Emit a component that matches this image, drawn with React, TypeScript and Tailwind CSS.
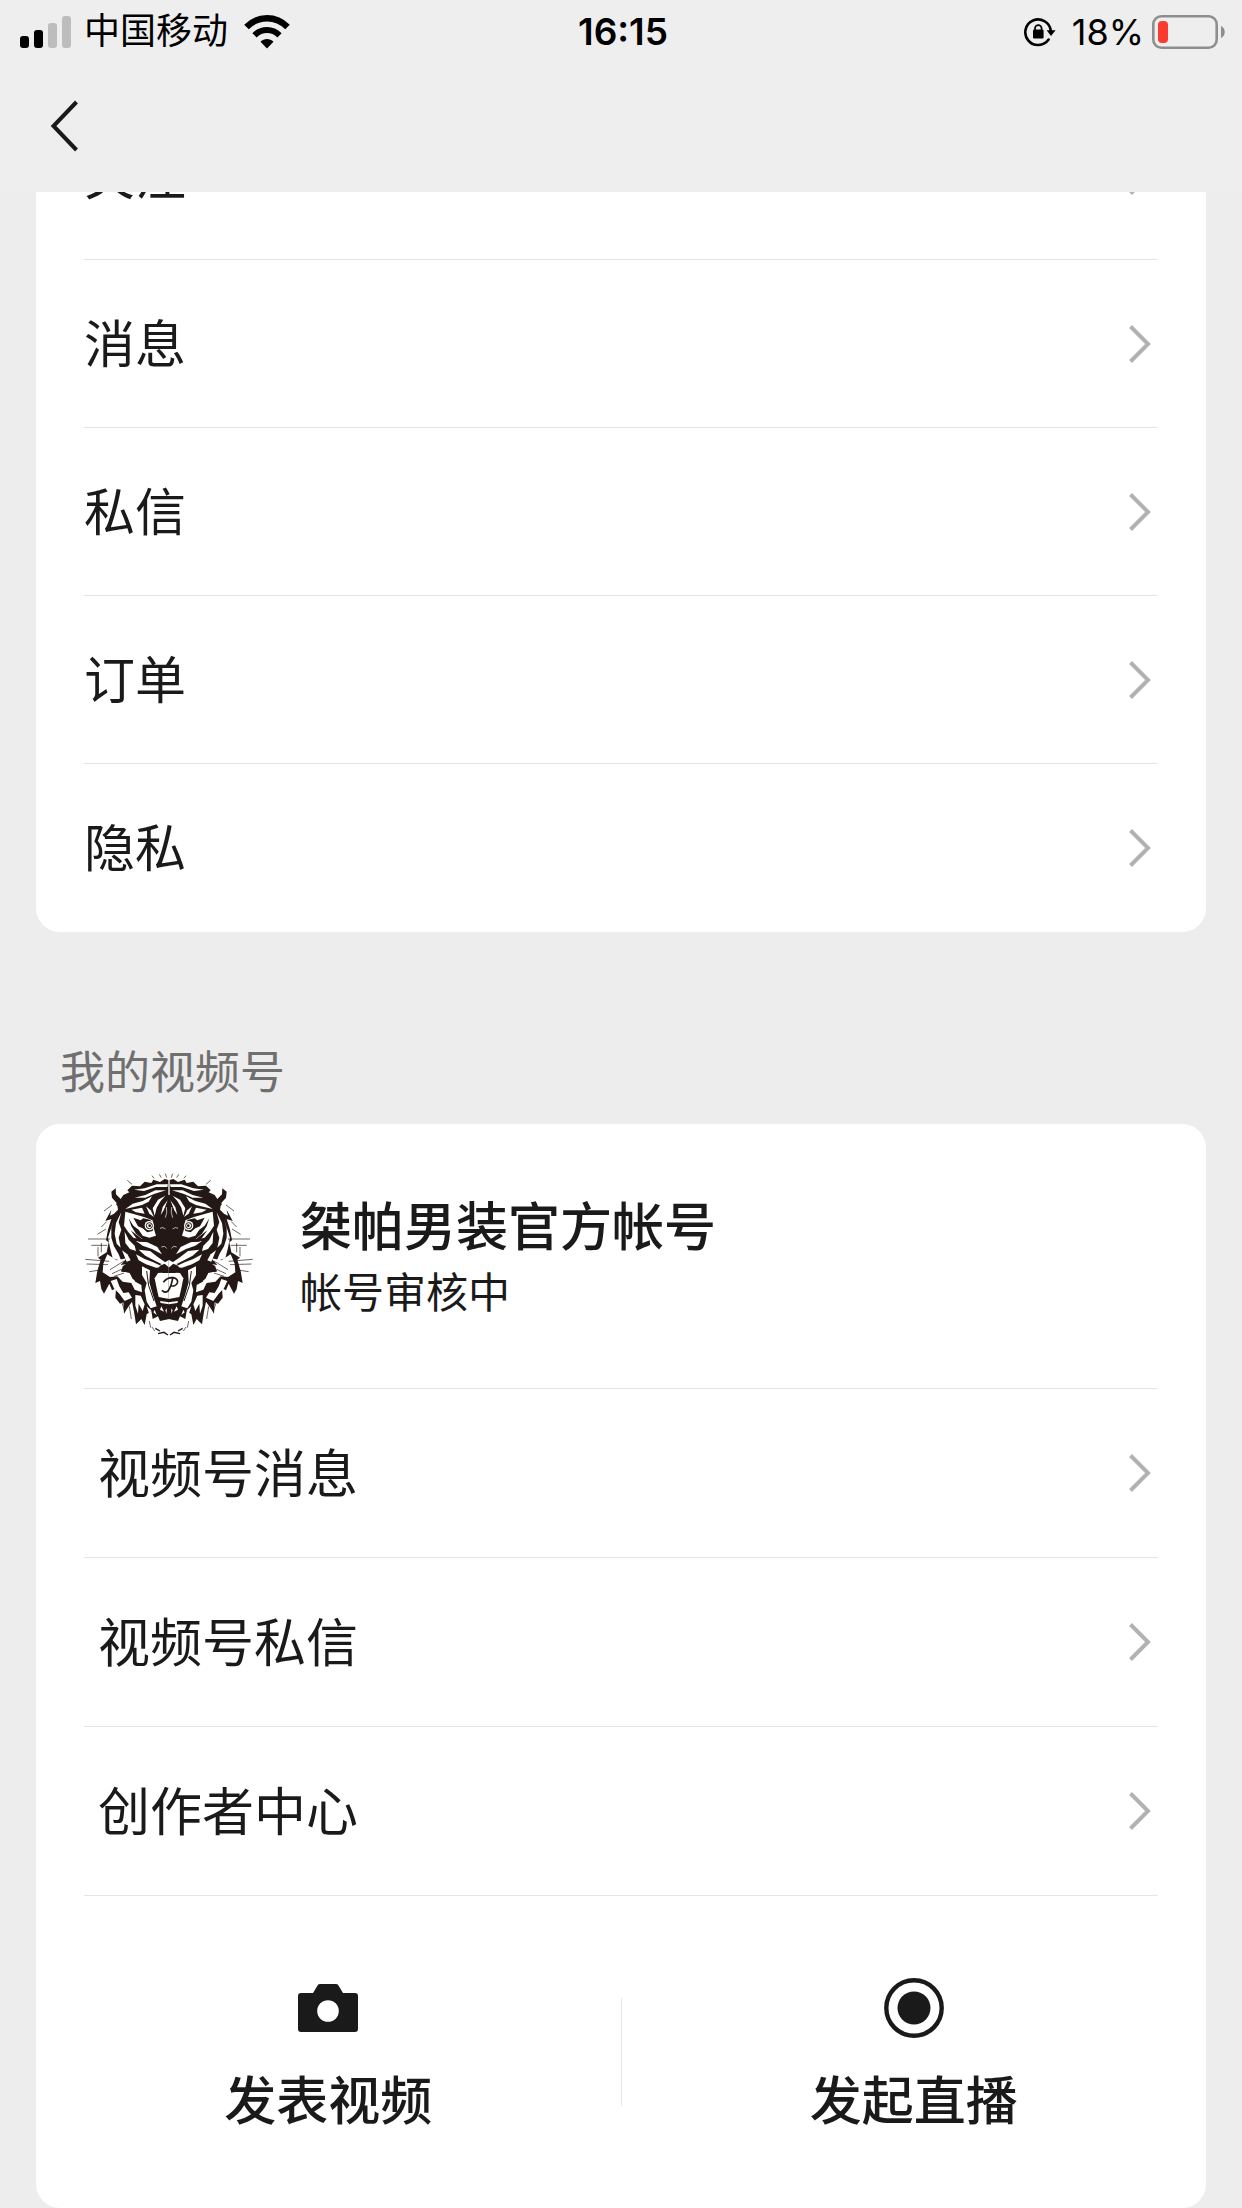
import React from 'react'

interface MenuRowProps {
  label: string
  indent?: boolean
  last?: boolean
}

interface ActionButtonProps {
  label: string
  children: React.ReactNode
}

const accountItems = ['关注', '消息', '私信', '订单', '隐私']
const channelItems = ['视频号消息', '视频号私信', '创作者中心']

const SignalIcon: React.FC = () => (
  <svg className="w-[52px] h-8" viewBox="0 0 52 32" aria-hidden="true">
    <rect x="0" y="20" width="9" height="12" rx="3" fill="#000" />
    <rect x="14" y="14" width="9" height="18" rx="3" fill="#000" />
    <rect x="28" y="7" width="9" height="25" rx="3" fill="#bdbdbd" />
    <rect x="42" y="0" width="9" height="32" rx="3" fill="#bdbdbd" />
  </svg>
)

const WifiIcon: React.FC = () => (
  <svg className="w-[46px] h-[34px]" viewBox="0 0 46 34" aria-hidden="true">
    <path d="M2.500 12C14 .3 32 .3 43.500 12" fill="none" stroke="#000" strokeWidth="6.400" />
    <path d="M10.500 20.300C17.600 13.300 28.400 13.300 35.500 20.300" fill="none" stroke="#000" strokeWidth="6" />
    <path d="M16.500 26.800C20.200 23 25.800 23 29.500 26.800L23 33.500Z" />
  </svg>
)

const RotationLockIcon: React.FC = () => (
  <svg className="w-8 h-[30px]" viewBox="0 0 32 30" aria-hidden="true">
    <path d="M24.6 22.6A12.8 12.8 0 1 1 26.8 13.5" fill="none" stroke="#000" strokeWidth="2.6" strokeLinecap="round" />
    <path d="M22.6 13.2H31.6L27 19Z" />
    <rect x="9" y="12.5" width="10.6" height="9" rx="1.2" />
    <path d="M11 13V11.4A3.3 3.3 0 0 1 17.6 11.4V13" fill="none" stroke="#000" strokeWidth="1.7" />
  </svg>
)

const BatteryIcon: React.FC = () => (
  <svg className="w-[74px] h-[34px]" viewBox="0 0 74 34" aria-hidden="true">
    <rect x="1.3" y="1.3" width="63.4" height="31.4" rx="8" fill="none" stroke="#8e8e8e" strokeWidth="2.6" />
    <rect x="6" y="6" width="10" height="22" rx="4" fill="#fb3b30" />
    <path d="M69 11C74 13 74 21 69 23Z" fill="#8e8e8e" />
  </svg>
)

// left side of the face, mirrored for the right side
const TigerHalf: React.FC = () => (
  <>
    <path
      fill="#231815"
      d="M296 68L282 64L268 73L248 66L242 76L222 72L208 86L184 84L170 98L176 104L158 112L150 124L136 110L135 92L122 102L124 120L138 136L134 148L120 160L104 190L122 184L112 216L106 248L114 254L108 284L82 300L90 306L80 340L74 376L88 370L92 394L100 408L116 378L124 398L136 392L134 420L148 438L158 434L160 468L170 452L184 432L190 462L196 500L212 484L222 502L228 470L242 460L246 484L262 476L268 490L296 484Z"
    />
    <g fill="#fff">
      <path d="M128 132L140 144L142 156L130 168L118 174Z" />
      <path d="M292 80L258 80L222 92L190 96L220 100L256 88L290 88Z" />
      <path d="M286 98L254 98L224 112L192 120L224 120L252 108Z" />
      <path d="M284 114L262 126L246 152L252 174L258 150L270 130Z" />
      <path d="M292 126L276 148L270 172L280 156Z" />
      <path d="M244 116L216 130L186 138L164 154L180 150L214 142L234 132Z" />
      <path d="M226 146L240 158L250 178L236 168Z" />
      <path d="M214 150L222 168L196 164L182 156Z" />
      <path d="M164 162L186 168L220 178L246 188L248 208L256 234L236 240L216 234L204 216L188 204L174 182L182 206L196 228L218 246L188 240L172 222L160 204Z" />
      <path d="M152 164L144 194L152 216L144 240L150 270L138 258L132 228L136 196Z" />
      <path d="M130 184L122 212L122 240L130 266L144 290L152 310L126 302L118 270L112 240Z" />
      <path d="M162 222L174 246L192 264L196 280L178 274L164 256Z" />
      <path d="M154 278L170 290L180 308L168 312Z" />
      <path d="M196 250L230 254L260 268L274 290L244 274L216 264Z" />
      <path d="M204 276L238 280L264 300L284 314L278 322L250 308L224 294Z" />
      <path d="M196 290L222 304L248 314L278 328L256 330L226 320L204 308Z" />
      <path d="M110 290L138 308L168 302L150 322L174 318L150 340L178 346L194 372L212 382L214 404L192 396L182 376L156 372L140 356L118 358L96 344L98 318Z" />
      <path d="M120 370L138 364L146 386L158 406L174 404L184 420L162 430L146 408L130 392Z" />
      <path d="M214 326L238 338L236 374L246 410L258 446L240 452L228 432L222 398L228 376L214 352Z" />
      <path d="M296 344L262 346L252 362L258 392L264 418L296 424Z" />
      <path d="M194 412L210 414L222 440L216 460L204 438L202 468L194 444Z" />
      <path d="M228 446L242 458L236 470Z" />
      <path d="M268 322L296 306V342L278 342Z" />
      <path d="M268 430L296 434V440L270 436Z" />
      <path d="M272 446L280 462L268 456ZM252 456L258 472L248 464ZM288 452V468L284 458Z" />
    </g>
    <g fill="#231815">
      <path d="M282 318L296 330V346L276 346L262 334L268 324Z" />
      <path d="M156 326L184 306L208 328L214 350L206 374L186 364L176 344L152 342Z" />
      <path d="M188 180L210 188L218 182L238 186L250 200L246 220L230 224L216 212L202 206Z" />
      <path d="M180 218L214 244L254 242L266 252L236 252L204 252Z" />
    </g>
    <circle cx="236" cy="204" r="14" fill="#fff" />
    <circle cx="236" cy="204" r="9" fill="none" stroke="#231815" strokeWidth="3" />
    <circle cx="237" cy="204" r="4" fill="#231815" />
    <g fill="none" stroke="#231815" strokeWidth="3">
      <path d="M52 244H118M62 263H110M44 305L116 311M48 319L112 321M56 342L82 338" strokeWidth="2" />
      <path d="M100 160L124 142M92 208L108 192M80 230L106 214M92 256V284M82 268V296" strokeWidth="2" />
      <path d="M184 80L170 68M250 62L244 54M272 60L266 50M288 60L284 48" strokeWidth="2" />
      <path d="M118 336L160 310M124 348L172 326M130 356L160 346" strokeWidth="2" />
      <path d="M228 340L234 384L250 430" />
      <path d="M152 430L162 460M176 446L182 484M236 490L240 510M208 470L204 492M244 508L252 520" strokeWidth="2" />
      <path d="M254 512L268 520M262 528L280 524L292 532" strokeWidth="4" />
    </g>
  </>
)

const TigerAvatar: React.FC = () => (
  <svg className="w-[170px] h-[170px] shrink-0" viewBox="40 40 510 510" role="img" aria-label="头像">
    <TigerHalf />
    <g transform="translate(590 0) scale(-1 1)">
      <TigerHalf />
    </g>
    <path d="M295 118L274 174L256 184L258 256L284 276L295 304L306 276L332 256L334 184L316 174Z" fill="#231815" />
    <path
      d="M284 180Q291 164 287 148M306 180Q299 164 303 148M268 212Q276 206 284 214M322 212Q314 206 306 214M272 268Q282 262 288 272M318 268Q308 262 302 272"
      fill="none"
      stroke="#fff"
      strokeWidth="2"
    />
    <path d="M295 66V112" stroke="#fff" strokeWidth="4" />
    <path
      d="M278 374Q290 358 308 360Q324 364 320 376Q314 388 302 384M306 362Q302 386 292 400Q282 408 274 398"
      fill="none"
      stroke="#231815"
      strokeWidth="5"
    />
  </svg>
)

const CameraIcon: React.FC = () => (
  <svg className="w-[60px] h-[60px]" viewBox="0 0 60 60" aria-hidden="true">
    <path
      fill="#1a1a1a"
      fillRule="evenodd"
      d="M22 6H38Q39.500 6 40.300 7.300L45 15H57Q60 15 60 18V51Q60 54 57 54H3Q0 54 0 51V18Q0 15 3 15H15L19.700 7.300Q20.500 6 22 6ZM30 22.200A10.800 10.800 0 1 0 30 43.800A10.800 10.800 0 1 0 30 22.200Z"
    />
  </svg>
)

const RecordIcon: React.FC = () => (
  <svg className="w-[60px] h-[60px]" viewBox="0 0 60 60" aria-hidden="true">
    <circle cx="30" cy="30" r="27.700" fill="none" stroke="#1a1a1a" strokeWidth="4.400" />
    <circle cx="30" cy="30" r="16.500" fill="#1a1a1a" />
  </svg>
)

const MenuRow: React.FC<MenuRowProps> = ({ label, indent, last }) => (
  <button
    type="button"
    className={`flex w-full items-center justify-between pr-1.5 text-left leading-[72px] ${
      indent ? 'h-[169px] pl-3.5 text-[52px]' : 'h-[168px] text-[51px]'
    } ${last ? '' : 'border-b border-[#e5e5e5]'}`}
  >
    <span className="pt-1">{label}</span>
    <svg className="w-6 h-10" viewBox="0 0 24 40" fill="none" aria-hidden="true">
      <path d="M2.500 2.500L20 20L2.500 37.500" stroke="#b2b2b2" strokeWidth="4" />
    </svg>
  </button>
)

const ActionButton: React.FC<ActionButtonProps> = ({ label, children }) => (
  <button
    type="button"
    className="flex flex-1 flex-col items-center gap-7 pt-3 text-[52px] font-medium leading-[72px]"
  >
    {children}
    {label}
  </button>
)

const StatusBar: React.FC = () => (
  <div className="grid h-16 grid-cols-[1fr_auto_1fr] items-center pl-5 pr-4 text-black">
    <div className="flex items-center">
      <SignalIcon />
      <span className="ml-3 mr-4 text-[36px] leading-[48px]">中国移动</span>
      <WifiIcon />
    </div>
    <time className="font-['Inter'] text-[37px] font-semibold leading-[48px]">16:15</time>
    <div className="flex items-center justify-end">
      <RotationLockIcon />
      <span className="ml-4 mr-2 font-['Inter'] text-[36px] leading-[48px]">18%</span>
      <BatteryIcon />
    </div>
  </div>
)

const App: React.FC = () => {
  return (
    <div className="min-h-screen overflow-hidden bg-[#ededed] font-['Liberation_Sans','Noto_Sans_CJK_SC',sans-serif] text-[#1a1a1a]">
      <header className="relative z-10 h-[192px] bg-[#eeeeee]">
        <StatusBar />
        <nav className="flex h-32 items-center pb-1 pl-12">
          <button type="button" aria-label="返回">
            <svg className="w-8 h-[54px]" viewBox="0 0 32 54" fill="none" aria-hidden="true">
              <path d="M28.500 3L5.500 27L28.500 51" stroke="#1a1a1a" strokeWidth="4" />
            </svg>
          </button>
        </nav>
      </header>

      <main className="px-9">
        {/* scrolled up, the first row sits partly under the header */}
        <section className="-mt-[100px] rounded-3xl bg-white px-12">
          {accountItems.map((item, index) => (
            <MenuRow key={item} label={item} last={index === accountItems.length - 1} />
          ))}
        </section>

        <h2 className="mt-[110px] mb-[18px] pl-6 text-[45px] leading-[64px] text-[#6f6f6f]">我的视频号</h2>

        <section className="rounded-3xl bg-white px-12">
          <div className="flex h-[265px] items-center gap-[46px] border-b border-[#e5e5e5]">
            <TigerAvatar />
            <div className="pt-1">
              <h3 className="text-[52px] font-medium leading-[72px]">桀帕男装官方帐号</h3>
              <p className="text-[42px] leading-[60px]">帐号审核中</p>
            </div>
          </div>
          {channelItems.map((item) => (
            <MenuRow key={item} label={item} indent />
          ))}
          <div className="-mx-12 flex h-[312px] items-center">
            <ActionButton label="发表视频">
              <CameraIcon />
            </ActionButton>
            <div className="h-[108px] w-px bg-[#e5e5e5]" />
            <ActionButton label="发起直播">
              <RecordIcon />
            </ActionButton>
          </div>
        </section>
      </main>
    </div>
  )
}

export default App
